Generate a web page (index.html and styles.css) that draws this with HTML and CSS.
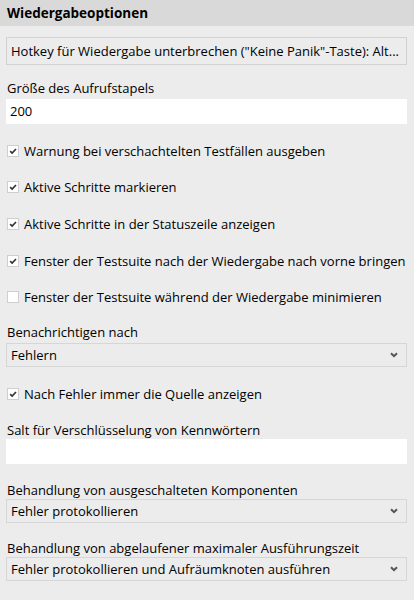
FILE: index.html
```html
<!DOCTYPE html>
<html lang="de">
<head>
<meta charset="utf-8">
<link rel="stylesheet" href="styles.css">
</head>
<body>
<div class="panel">
  <div class="header">Wiedergabeoptionen</div>
  <div class="content">
    <div class="button">Hotkey für Wiedergabe unterbrechen ("Keine Panik"-Taste): Alt...</div>

    <div class="group g-stack">
      <div class="label">Größe des Aufrufstapels</div>
      <div class="input in-top">200</div>
    </div>

    <div class="check c1"><span class="box on"><svg viewBox="0 0 12 12" width="12" height="12"><path d="M2.6 6.2 L5 8.5 L9.6 3.6" fill="none" stroke="#333" stroke-width="2"/></svg></span>Warnung bei verschachtelten Testfällen ausgeben</div>
    <div class="check c2"><span class="box on"><svg viewBox="0 0 12 12" width="12" height="12"><path d="M2.6 6.2 L5 8.5 L9.6 3.6" fill="none" stroke="#333" stroke-width="2"/></svg></span>Aktive Schritte markieren</div>
    <div class="check c3"><span class="box on"><svg viewBox="0 0 12 12" width="12" height="12"><path d="M2.6 6.2 L5 8.5 L9.6 3.6" fill="none" stroke="#333" stroke-width="2"/></svg></span>Aktive Schritte in der Statuszeile anzeigen</div>
    <div class="check c3"><span class="box on"><svg viewBox="0 0 12 12" width="12" height="12"><path d="M2.6 6.2 L5 8.5 L9.6 3.6" fill="none" stroke="#333" stroke-width="2"/></svg></span>Fenster der Testsuite nach der Wiedergabe nach vorne bringen</div>
    <div class="check c2"><span class="box"></span>Fenster der Testsuite während der Wiedergabe minimieren</div>

    <div class="group g-notify">
      <div class="label">Benachrichtigen nach</div>
      <div class="select sel-top"><span>Fehlern</span><svg class="chev" viewBox="0 0 8 6" width="8" height="6"><path d="M1 1.2 L4 4.2 L7 1.2" fill="none" stroke="#555" stroke-width="2"/></svg></div>
    </div>

    <div class="check c3"><span class="box on"><svg viewBox="0 0 12 12" width="12" height="12"><path d="M2.6 6.2 L5 8.5 L9.6 3.6" fill="none" stroke="#333" stroke-width="2"/></svg></span>Nach Fehler immer die Quelle anzeigen</div>

    <div class="group g-salt">
      <div class="label">Salt für Verschlüsselung von Kennwörtern</div>
      <div class="input"></div>
    </div>

    <div class="group g-salt">
      <div class="label">Behandlung von ausgeschalteten Komponenten</div>
      <div class="select"><span>Fehler protokollieren</span><svg class="chev" viewBox="0 0 8 6" width="8" height="6"><path d="M1 1.2 L4 4.2 L7 1.2" fill="none" stroke="#555" stroke-width="2"/></svg></div>
    </div>

    <div class="group g-last">
      <div class="label">Behandlung von abgelaufener maximaler Ausführungszeit</div>
      <div class="select"><span>Fehler protokollieren und Aufräumknoten ausführen</span><svg class="chev" viewBox="0 0 8 6" width="8" height="6"><path d="M1 1.2 L4 4.2 L7 1.2" fill="none" stroke="#555" stroke-width="2"/></svg></div>
    </div>
  </div>
</div>
</body>
</html>
```
FILE: styles.css
```css
html, body {
  margin: 0;
  padding: 0;
  background: #ececec;
}
body {
  font-family: "Open Sans", "Noto Sans", "Liberation Sans", sans-serif;
  font-size: 13px;
  color: #000;
  width: 414px;
  height: 600px;
  overflow: hidden;
}
.header {
  height: 26px;
  background: #d9d9d9;
  font-weight: bold;
  font-size: 13.5px;
  line-height: 26px;
  padding-left: 7px;
  box-sizing: border-box;
}
.content {
  padding: 0 7px 0 6px;
}
.button {
  margin-top: 11px;
  height: 28px;
  box-sizing: border-box;
  border: 1px solid #d2d2d2;
  line-height: 26px;
  padding-left: 4px;
  white-space: nowrap;
  overflow: hidden;
}
.group {
  display: flex;
  flex-direction: column;
}
.g-stack { margin-top: 15px; }
.g-notify { margin-top: 17px; }
.g-salt { margin-top: 18px; }
.g-last { margin-top: 17px; }
.label {
  height: 17px;
  line-height: 17px;
  padding-left: 1px;
  white-space: nowrap;
}
.input {
  height: 25px;
  box-sizing: border-box;
  background: #fff;
  line-height: 25px;
  padding-left: 4px;
}
.in-top { margin-top: 2px; }
.select {
  height: 24px;
  box-sizing: border-box;
  border: 1px solid #d6d6d6;
  display: flex;
  align-items: center;
  justify-content: space-between;
  padding: 0 8px 0 4px;
  white-space: nowrap;
}
.sel-top { margin-top: 2px; }
.chev { flex: none; }
.check {
  height: 20px;
  display: flex;
  align-items: center;
  gap: 5px;
  padding-left: 1px;
  white-space: nowrap;
}
.c1 { margin-top: 17px; }
.c2 { margin-top: 16px; }
.c3 { margin-top: 17px; }
.box {
  width: 12px;
  height: 12px;
  box-sizing: border-box;
  background: #fff;
  border: 1px solid #cfcfcf;
  display: flex;
  align-items: center;
  justify-content: center;
  flex: none;
}
.box svg {
  width: 10px;
  height: 10px;
}
```
